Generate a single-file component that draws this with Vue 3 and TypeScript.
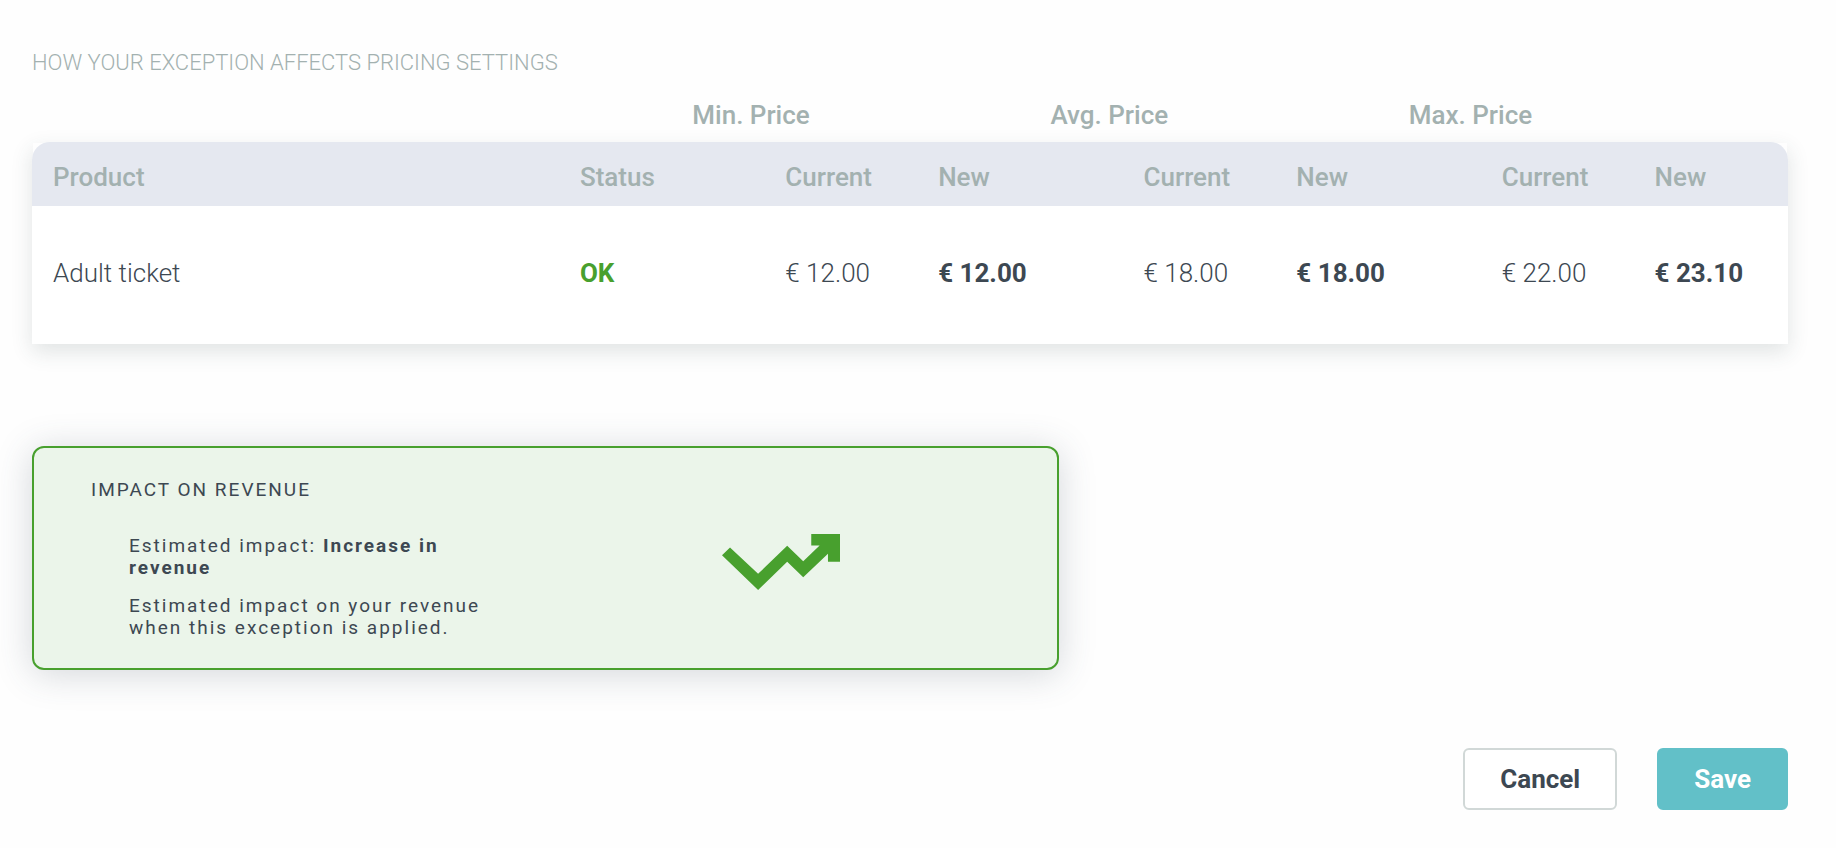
<script setup lang="ts">
interface PricePair {
  current: string
  next: string
}

interface ProductRow {
  name: string
  status: string
  prices: PricePair[]
}

const priceGroups: string[] = ['Min. Price', 'Avg. Price', 'Max. Price']

const rows: ProductRow[] = [
  {
    name: 'Adult ticket',
    status: 'OK',
    prices: [
      { current: '€ 12.00', next: '€ 12.00' },
      { current: '€ 18.00', next: '€ 18.00' },
      { current: '€ 22.00', next: '€ 23.10' },
    ],
  },
]
</script>

<template>
  <main class="page">
    <h1 class="title">HOW YOUR EXCEPTION AFFECTS PRICING SETTINGS</h1>

    <table class="prices">
      <colgroup>
        <col class="col-product" />
        <col class="col-status" />
        <template v-for="group in priceGroups" :key="group">
          <col class="col-current" />
          <col class="col-new" />
        </template>
      </colgroup>
      <thead>
        <tr class="groups">
          <td colspan="2"></td>
          <th v-for="group in priceGroups" :key="group" colspan="2" scope="colgroup">{{ group }}</th>
        </tr>
      </thead>
      <tbody>
        <tr class="labels">
          <th scope="col">Product</th>
          <th scope="col">Status</th>
          <template v-for="group in priceGroups" :key="group">
            <th scope="col" class="current">Current</th>
            <th scope="col">New</th>
          </template>
        </tr>
        <tr v-for="row in rows" :key="row.name" class="product">
          <td>{{ row.name }}</td>
          <td class="status">{{ row.status }}</td>
          <template v-for="(price, i) in row.prices" :key="i">
            <td class="current">{{ price.current }}</td>
            <td class="new">{{ price.next }}</td>
          </template>
        </tr>
      </tbody>
    </table>

    <section class="impact" aria-labelledby="impact-title">
      <div class="impact-text">
        <h2 id="impact-title">IMPACT ON REVENUE</h2>
        <div class="impact-body">
          <p>Estimated impact: <strong>Increase in revenue</strong></p>
          <p>Estimated impact on your revenue when this exception is applied.</p>
        </div>
      </div>
      <div class="impact-icon">
        <svg viewBox="0 0 353 167" width="118" height="56" aria-hidden="true">
          <path
            d="M0 63 24 40 108 119 195 35 243 81 292 34H267V0H353V83H317V59L243 129 195 83 108 167Z"
            fill="#48a02e"
          />
        </svg>
      </div>
    </section>

    <div class="actions">
      <button type="button" class="btn cancel">Cancel</button>
      <button type="button" class="btn save">Save</button>
    </div>
  </main>
</template>

<style>
body {
  margin: 0;
  background: #fefefe;
}
</style>

<style scoped>
.page {
  padding: 48px 48px 38px 32px;
  font-family: Roboto, "Liberation Sans", sans-serif;
  color: #3d4852;
}

.title {
  margin: 0 0 18px;
  font-size: 22px;
  line-height: 30px;
  font-weight: 300;
  color: #a3b1b0;
}

.prices {
  width: 100%;
  table-layout: fixed;
  border-collapse: separate;
  border-spacing: 0;
  font-size: 26px;
  line-height: 30px;
}

.col-status,
.col-new {
  width: 6.4%;
}

.col-current {
  width: 14%;
}

.col-new:last-child {
  width: 7.6%;
}

.prices th,
.prices td {
  padding: 0;
  text-align: left;
  white-space: nowrap;
}

.prices th {
  font-weight: 500;
  color: #a3b1b0;
}

.groups th,
.groups td {
  box-sizing: border-box;
  height: 46px;
  vertical-align: middle;
}

.prices .groups th {
  padding-bottom: 8px;
}

.prices tbody {
  background: #fff;
  box-shadow: 0 8px 20px rgba(50, 70, 70, 0.14);
}

.prices .labels th {
  height: 64px;
  padding-top: 6px;
  box-sizing: border-box;
  background: #e5e8f0;
}

.labels th:first-child {
  border-top-left-radius: 18px;
}

.labels th:last-child {
  border-top-right-radius: 18px;
}

.prices .product td {
  height: 138px;
  padding-bottom: 4px;
  box-sizing: border-box;
  font-weight: 300;
}

.prices tbody tr > :first-child {
  padding-left: 21px;
}

.prices tbody .current {
  padding-left: 93px;
}

.prices .product .new {
  font-weight: 700;
}

.prices .product .status {
  font-weight: 700;
  color: #48a02e;
}

.impact {
  display: grid;
  grid-template-columns: 1fr 1fr;
  box-sizing: border-box;
  width: 58.5%;
  margin-top: 102px;
  padding: 31px 46px 29px 57px;
  border: 2px solid #48a02e;
  border-radius: 12px;
  background: #ebf5ea;
  box-shadow: 0 4px 36px rgba(61, 72, 92, 0.22);
  font-size: 19px;
  line-height: 22px;
  letter-spacing: 2px;
}

.impact h2 {
  margin: 0 0 34px;
  font-size: 19px;
  line-height: 22px;
  font-weight: 400;
}

.impact-body {
  padding: 0 38px;
}

.impact p {
  margin: 0 0 16px;
}

.impact p:last-child {
  margin-bottom: 0;
}

.impact-icon {
  display: flex;
  align-items: center;
  justify-content: center;
  padding-top: 6px;
}

.actions {
  display: flex;
  justify-content: flex-end;
  gap: 40px;
  margin-top: 78px;
}

.btn {
  box-sizing: border-box;
  padding: 14px 35px;
  border: 2px solid transparent;
  border-radius: 6px;
  font-family: inherit;
  font-size: 26px;
  line-height: 30px;
  font-weight: 700;
  cursor: pointer;
}

.cancel {
  border-color: #d1d8d7;
  background: #fff;
  color: #3d4852;
}

.save {
  border-color: #62c0c8;
  background: #62c0c8;
  color: #fff;
}
</style>
